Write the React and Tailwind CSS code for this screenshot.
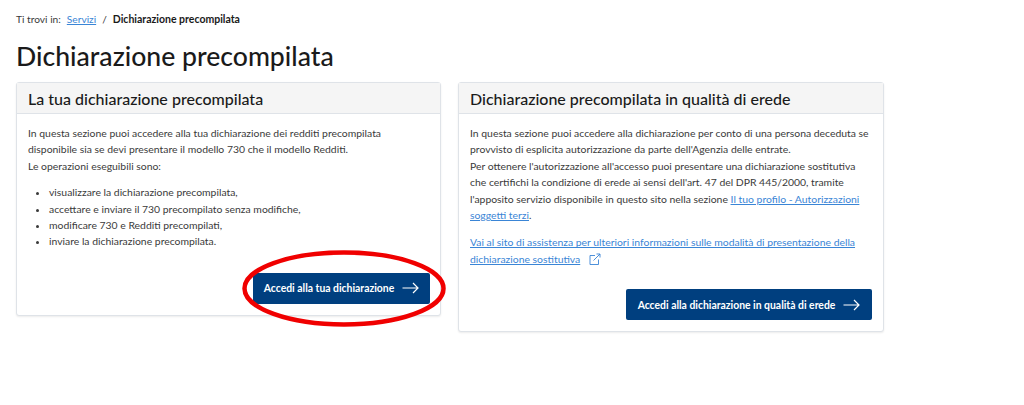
import React from 'react';

const font = "font-['Lato','Noto_Sans',sans-serif]";

const Arrow = () => (
  <svg width="17" height="12" viewBox="0 0 17 12" fill="none" stroke="white" strokeWidth="1.2">
    <path d="M0.5 6H16M11 1l5 5-5 5" />
  </svg>
);

const ExternalIcon = () => (
  <svg className="inline-block ml-[9px] align-[-2px]" width="12" height="12" viewBox="0 0 12 12" fill="none" stroke="#3a85d6" strokeWidth="0.9">
    <path d="M6 2.5H1v9h8.5V6.5M4.5 7.5L11 1M7.5 1H11v3.5" />
  </svg>
);

const Card = ({ title, className, children }) => (
  <section className={`border border-[#dfe3e8] rounded-[3px] bg-white shadow-[0_1px_2px_rgba(0,0,0,0.08)] ${className}`}>
    <h2 className="h-[31px] bg-[#f5f5f5] border-b border-[#dfe3e8] pl-[11px] pt-[5px] text-[16px] font-medium leading-[22px] text-[#1a1a1a]">
      {title}
    </h2>
    <div className="px-[11px] pt-[11px] text-[10.4px] leading-[16.4px] text-[#3a3a3a]">{children}</div>
  </section>
);

const Button = ({ label, className }) => (
  <a className={`h-[31px] flex items-center justify-center gap-[8px] bg-[#003f7f] rounded-[2px] text-white text-[10.4px] font-bold ${className}`}>
    {label}
    <Arrow />
  </a>
);

export default function App() {
  return (
    <div className={`${font} relative w-[1024px] h-[405px] bg-white overflow-hidden px-4 pt-[13px]`}>
      <nav className="h-[13px] flex items-center text-[10.2px] text-[#3a3a3a]">
        <span>Ti trovi in:</span>
        <a className="ml-[6px] text-[#3a85d6] underline">Servizi</a>
        <span className="mx-[6px]">/</span>
        <span className="font-bold text-[10.5px] text-[#1a1a1a]">Dichiarazione precompilata</span>
      </nav>
      <h1 className="mt-[12px] text-[26.6px] font-medium leading-[36px] text-[#1a1a1a]">Dichiarazione precompilata</h1>
      <div className="mt-[8px] flex items-start gap-[17px]">
        <Card title="La tua dichiarazione precompilata" className="w-[425px] h-[234px]">
          <p>
            In questa sezione puoi accedere alla tua dichiarazione dei redditi precompilata
            <br />
            disponibile sia se devi presentare il modello 730 che il modello Redditi.
            <br />
            Le operazioni eseguibili sono:
          </p>
          <ul className="mt-[10px] ml-[21px] list-disc">
            <li>visualizzare la dichiarazione precompilata,</li>
            <li>accettare e inviare il 730 precompilato senza modifiche,</li>
            <li>modificare 730 e Redditi precompilati,</li>
            <li>inviare la dichiarazione precompilata.</li>
          </ul>
          <div className="mt-[23px] flex justify-end">
            <Button label="Accedi alla tua dichiarazione" className="w-[177px] mr-[-1px]" />
          </div>
        </Card>
        <Card title="Dichiarazione precompilata in qualità di erede" className="w-[426px] h-[250px]">
          <p>
            In questa sezione puoi accedere alla dichiarazione per conto di una persona deceduta se
            <br />
            provvisto di esplicita autorizzazione da parte dell'Agenzia delle entrate.
            <br />
            Per ottenere l'autorizzazione all'accesso puoi presentare una dichiarazione sostitutiva
            <br />
            che certifichi la condizione di erede ai sensi dell'art. 47 del DPR 445/2000, tramite
            <br />
            l'apposito servizio disponibile in questo sito nella sezione{' '}
            <a className="text-[#3a85d6] underline">
              Il tuo profilo - Autorizzazioni
              <br />
              soggetti terzi
            </a>
            .
          </p>
          <p className="mt-[11px]">
            <a className="text-[#3a85d6] underline">
              Vai al sito di assistenza per ulteriori informazioni sulle modalità di presentazione della
              <br />
              dichiarazione sostitutiva
            </a>
            <ExternalIcon />
          </p>
          <div className="mt-[22px] flex justify-end">
            <Button label="Accedi alla dichiarazione in qualità di erede" className="w-[246px]" />
          </div>
        </Card>
      </div>
      {/* red circle drawn over the button */}
      <svg className="absolute left-[240px] top-[248px]" width="208" height="81" viewBox="0 0 208 81" fill="none">
        <ellipse cx="104" cy="40.5" rx="99.5" ry="36" stroke="#f00000" strokeWidth="4.5" />
      </svg>
    </div>
  );
}
